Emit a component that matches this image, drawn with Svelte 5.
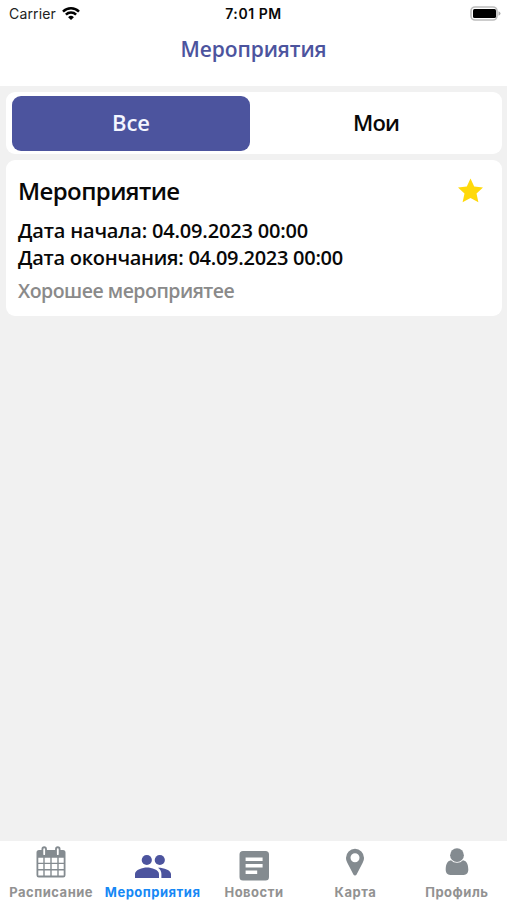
<script>
let filter = $state("all");
let active = $state("events");

const filters = [
    { id: "all", label: "Все" },
    { id: "my", label: "Мои" }
];

const events = [
    {
        title: "Мероприятие",
        start: "04.09.2023 00:00",
        end: "04.09.2023 00:00",
        description: "Хорошее мероприятее"
    }
];

const tabs = [
    { id: "schedule", label: "Расписание" },
    { id: "events", label: "Мероприятия" },
    { id: "news", label: "Новости" },
    { id: "map", label: "Карта" },
    { id: "profile", label: "Профиль" }
];
</script>

<div class="screen">
    <header>
        <div class="status">
            <div class="carrier">
                <span>Carrier</span>
                <svg width="18" height="14" viewBox="0 0 18 14">
                    <path d="M1 4.600a11.500 11.500 0 0 1 16 0M3.900 7.700a7.200 7.200 0 0 1 10.200 0" fill="none" stroke="#000" stroke-width="2.500"/>
                    <path d="M9 13 6.100 10.200a4.100 4.100 0 0 1 5.800 0z"/>
                </svg>
            </div>
            <div class="time">7:01 PM</div>
            <svg class="battery" width="31" height="15" viewBox="0 0 31 15">
                <rect x="1" y="1" width="26" height="13" rx="4" fill="#fff" stroke="#bcbcbc" stroke-width="1.6"/>
                <rect x="3" y="3" width="23" height="9" rx="1.5"/>
                <path d="M28.500 5.300q2 .8 2 2.200t-2 2.200z" fill="#aaa"/>
            </svg>
        </div>
        <h1>Мероприятия</h1>
    </header>

    <main>
        <div class="switcher">
            {#each filters as item}
                <button class:selected={filter === item.id} class={item.id} onclick={() => (filter = item.id)}>{item.label}</button>
            {/each}
        </div>

        {#each events as event}
            <div class="card">
                <div class="card-head">
                    <h2>{event.title}</h2>
                    <svg width="26" height="26" viewBox="0 0 26 26">
                        <path d="m12.500 .5 3.700 8 8.800 1-6.500 6 1.900 8.800-7.900-4.400-7.900 4.400 1.900-8.800-6.500-6 8.800-1z" fill="#ffd90a"/>
                    </svg>
                </div>
                <div class="date start">Дата начала: {event.start}</div>
                <div class="date end">Дата окончания: {event.end}</div>
                <p>{event.description}</p>
            </div>
        {/each}
    </main>

    <nav>
        {#each tabs as tab}
            <button class="tab {tab.id}" class:active={active === tab.id} onclick={() => (active = tab.id)}>
                <svg width="40" height="40" viewBox="0 0 40 40">
                    {#if tab.id === "schedule"}
                        <path d="M8 8h2.500V7a2.700 2.700 0 0 1 5.400 0v1h8.200V7a2.700 2.700 0 0 1 5.400 0v1H32a2.500 2.500 0 0 1 2.500 2.500v22.700A2.300 2.300 0 0 1 32.200 35.500H7.800a2.300 2.300 0 0 1-2.300-2.300V10.500A2.500 2.500 0 0 1 8 8z"/>
                        <path d="M12.300 7.200a.9.9 0 0 1 1.800 0v5a.9.9 0 0 1-1.800 0zM25.900 7.200a.9.9 0 0 1 1.800 0v5a.9.9 0 0 1-1.800 0zM7.300 15.700h5v5h-5zM13.700 15.700h5.600v5h-5.600zM20.700 15.700h5.600v5h-5.600zM27.700 15.700h5v5h-5zM7.300 22.100h5v5h-5zM13.700 22.100h5.600v5h-5.600zM20.700 22.100h5.600v5h-5.600zM27.700 22.100h5v5h-5zM7.300 28.500h5v5h-5zM13.700 28.500h5.600v5h-5.600zM20.700 28.500h5.600v5h-5.600zM27.700 28.500h5v5h-5z" fill="#fff"/>
                    {:else if tab.id === "events"}
                        <circle cx="13.800" cy="18" r="5.100"/>
                        <circle cx="26.800" cy="18" r="5.100"/>
                        <path d="M2 36v-4c0-4 7.500-6.400 12-6.400s12 2.400 12 6.400v4z"/>
                        <path d="M28.400 36v-4c0-2.500-1.200-4.700-3.400-6.300C30 25.500 38 28 38 32v4z"/>
                    {:else if tab.id === "news"}
                        <path fill-rule="evenodd" d="M9 9h22.500a3.500 3.500 0 0 1 3.500 3.500v22.500a3.500 3.500 0 0 1-3.500 3.500H9a3.500 3.500 0 0 1-3.500-3.500V12.500a3.500 3.500 0 0 1 3.500-3.500zm2.600 6.500V19h17v-3.500zm0 6.500v3.500h17v-3.500zm0 6.500v3.500h11.600v-3.500z"/>
                    {:else if tab.id === "map"}
                        <path fill-rule="evenodd" d="M20 6.800a9 9 0 0 1 9 9c0 2.300-.6 3.400-1.300 4.900l-6.100 11.700a1.800 1.800 0 0 1-3.200 0l-6.100-11.700c-.7-1.500-1.300-2.600-1.300-4.900a9 9 0 0 1 9-9zm0 4.500a4.500 4.500 0 1 0 0 9 4.500 4.500 0 0 0 0-9z"/>
                    {:else}
                        <path d="M14 18.200c-4 .8-5.300 4.500-5.300 9.600 0 3 1.700 5.200 4.500 5.200h13.600c2.800 0 4.500-2.200 4.500-5.200 0-5.100-1.300-8.800-5.300-9.600a8.200 8.200 0 0 1-12 0z"/>
                        <circle cx="20" cy="13.200" r="6.900"/>
                    {/if}
                </svg>
                <span>{tab.label}</span>
            </button>
        {/each}
    </nav>
</div>

<style>
    :global(body) {
        background: #f1f1f1;
    }
    * {
        box-sizing: border-box;
    }
    .screen {
        display: flex;
        flex-direction: column;
        height: 900px;
        width: 100%;
        overflow: hidden;
        background: #f1f1f1;
        color: #080808;
        font-family: "Open Sans", "Noto Sans", sans-serif;
    }
    header {
        height: 86px;
        background: #fff;
    }
    .status {
        display: grid;
        grid-template-columns: 1fr auto 1fr;
        align-items: center;
        height: 27px;
        padding: 0 6px 0 9px;
        font: 400 14px Inter, sans-serif;
    }
    .carrier {
        display: flex;
        align-items: center;
        gap: 6px;
        color: #222;
        letter-spacing: 0.15px;
    }
    .time {
        margin-left: -3px;
        font-weight: 600;
        letter-spacing: 0.55px;
    }
    .battery {
        justify-self: end;
    }
    h1 {
        margin: 0;
        line-height: 44px;
        text-align: center;
        color: #4c549e;
        font-size: 21px;
        font-weight: 600;
        letter-spacing: -0.1px;
    }
    main {
        flex: 1;
        padding: 6px 5px 0 6px;
    }
    button {
        border: 0;
        padding: 0;
        background: none;
        font-family: inherit;
        color: inherit;
    }
    .switcher {
        display: flex;
        height: 62px;
        padding: 4px 6px 3px;
        border-radius: 9px;
        background: #fff;
    }
    .switcher button {
        flex: 0 0 238px;
        padding-bottom: 3px;
        border-radius: 9px;
        font-size: 22px;
        font-weight: 600;
    }
    .switcher .my {
        flex: 1;
        padding-left: 6px;
        letter-spacing: -0.9px;
    }
    .switcher .selected {
        background: #4c549e;
        color: #f4f6ff;
    }
    .card {
        height: 156px;
        margin-top: 6px;
        padding: 14px 18px 0 12px;
        border-radius: 9px;
        background: #fff;
    }
    .card-head {
        display: flex;
        align-items: center;
        justify-content: space-between;
        height: 34px;
    }
    h2 {
        margin: 0;
        padding-bottom: 1px;
        font-size: 24px;
        font-weight: 600;
        letter-spacing: -0.6px;
    }
    .date {
        line-height: 27px;
        font-size: 20px;
        font-weight: 600;
        white-space: nowrap;
    }
    .start {
        margin-top: 9px;
        letter-spacing: -0.18px;
    }
    .end {
        letter-spacing: -0.27px;
    }
    p {
        margin: 6px 0 0;
        line-height: 27px;
        color: #8a8a8a;
        font-size: 19.5px;
        font-weight: 600;
        letter-spacing: -0.5px;
    }
    nav {
        display: grid;
        grid-template-columns: repeat(5, 1fr);
        height: 59px;
        background: #fff;
    }
    .tab {
        display: flex;
        flex-direction: column;
        align-items: center;
        padding: 1px 0 0 1px;
        color: #929292;
        font: 700 13px Inter, sans-serif;
        letter-spacing: 0.5px;
    }
    .tab svg {
        flex: none;
        fill: #848b90;
    }
    .tab span {
        line-height: 20px;
        white-space: nowrap;
    }
    .events svg {
        fill: #4c549e;
    }
    .active {
        color: #1688f5;
    }
</style>
